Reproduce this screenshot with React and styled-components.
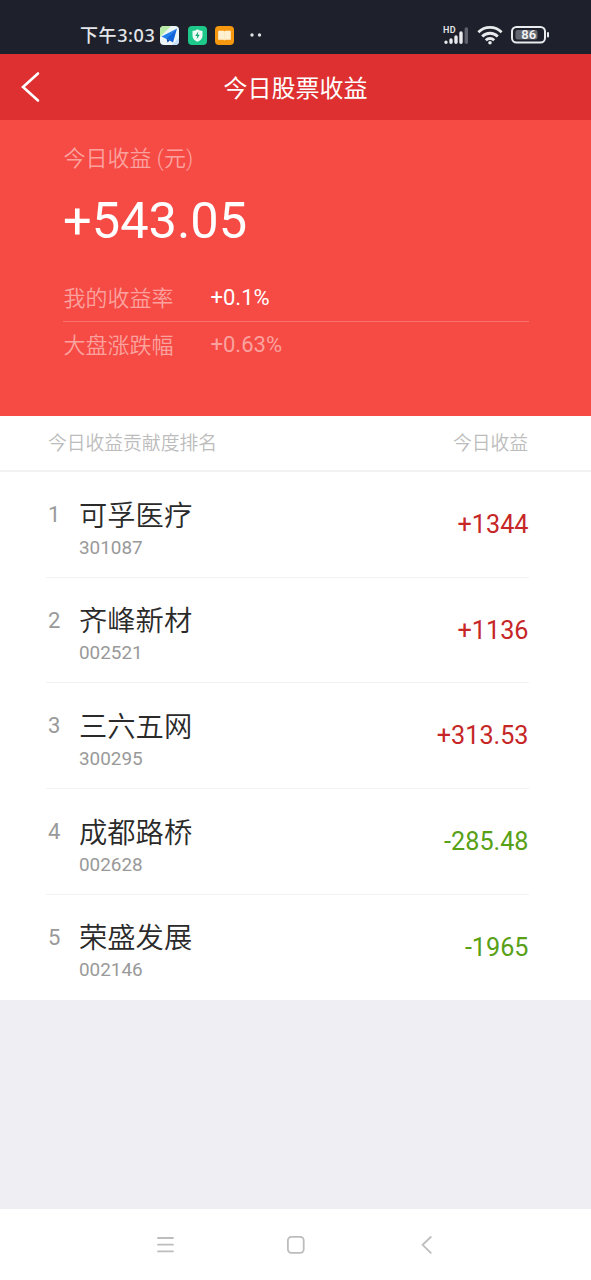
import React from 'react'
import styled, { createGlobalStyle } from 'styled-components'

const GlobalStyle = createGlobalStyle`
  * {
    box-sizing: border-box;
  }

  body {
    margin: 0;
    background: #efeef3;
    font-family: Roboto, 'Noto Sans CJK SC', sans-serif;
  }
`

const Screen = styled('div')`
  display: flex;
  flex-direction: column;
  width: 591px;
  height: 1280px;
  overflow: hidden;
  background: #efeef3;
`

const StatusBar = styled('div')`
  display: flex;
  align-items: center;
  justify-content: space-between;
  height: 54px;
  padding: 16px 41px 0 80px;
  background: #1e212b;
  color: #e4e6ea;
`

const StatusGroup = styled('div')`
  display: flex;
  align-items: center;
  height: 38px;
`

const Time = styled('span')`
  width: 80px;
  font: 500 18px/38px 'Noto Sans', 'Noto Sans CJK SC', sans-serif;
  letter-spacing: 0.6px;
  white-space: nowrap;
`

const StatusIcon = styled('svg')`
  display: block;
  flex: none;
  margin-right: ${props => props.$gap || 0}px;
`

const NavBar = styled('header')`
  display: grid;
  grid-template-columns: 60px 1fr 60px;
  align-items: center;
  height: 66px;
  background: #de3031;
  color: #fff;
`

const BackButton = styled('button')`
  height: 66px;
  padding: 0 0 0 20px;
  border: 0;
  background: none;
  color: #fff;

  svg {
    display: block;
  }
`

const Title = styled('h1')`
  margin: 0;
  padding-top: 5px;
  font-size: 24px;
  font-weight: 400;
  line-height: 61px;
  text-align: center;
`

const Summary = styled('section')`
  height: 296px;
  padding: 23px 62px 0 63px;
  background: #f64a45;
  color: #fff;
`

const SummaryLabel = styled('div')`
  padding-left: 0.5px;
  color: #fba29e;
  font-size: 22px;
  font-weight: 350;
  line-height: 32px;
`

const Total = styled('div')`
  margin-top: 14px;
  font-size: 50.6px;
  line-height: 64px;
`

const Rate = styled('div')`
  display: flex;
  align-items: center;
  height: ${props => props.$height}px;
  color: #fba29e;
  font-size: 22px;
  line-height: 32px;
`

const RateList = styled('div')`
  margin-top: 21px;

  ${Rate} + ${Rate} {
    border-top: 1px solid #f9716d;
  }
`

const RateName = styled('span')`
  width: 147.5px;
  padding: 2px 0 0 0.5px;
  font-weight: 350;
`

const RateValue = styled('span')`
  padding-top: 1px;
  color: ${props => (props.$strong ? '#fff' : '#fba29e')};
`

const ListHeader = styled('div')`
  display: flex;
  justify-content: space-between;
  height: 56px;
  padding: 1px 63px 0 48px;
  border-bottom: 2px solid #f3f3f3;
  background: #fff;
  color: #bcbcbc;
  font-size: 18.8px;
  font-weight: 350;
  line-height: 54px;
`

const StockList = styled('ul')`
  height: 527.5px;
  margin: 0;
  padding: 0 62px 0 46px;
  background: #fff;
  list-style: none;
`

const StockRow = styled('li')`
  display: grid;
  grid-template-columns: 31px 1fr auto;
  height: 105.7px;
  padding-left: 2px;
  border-bottom: 1px solid ${props => (props.$last ? 'transparent' : '#f2f2f2')};
`

const Rank = styled('span')`
  padding-top: 27px;
  color: #999;
  font-size: 22px;
  line-height: 32px;
`

const StockName = styled('div')`
  padding-top: 23.5px;
  color: #2a2a2a;
  font-size: 28.3px;
  font-weight: 350;
  line-height: 42px;
`

const StockCode = styled('div')`
  color: #999;
  font-size: 18.9px;
  line-height: 19px;
`

const Amount = styled('span')`
  padding-top: 35px;
  padding-right: 0.5px;
  color: ${props => (props.$up ? '#c62626' : '#58a016')};
  font-size: 25.2px;
  line-height: 36px;
`

const BottomNav = styled('nav')`
  display: grid;
  grid-template-columns: repeat(3, 130.5px);
  justify-content: center;
  align-items: center;
  justify-items: center;
  height: 71px;
  margin-top: auto;
  background: #fff;

  svg {
    display: block;
  }
`

const stocks = [
  { name: '可孚医疗', code: '301087', amount: '+1344' },
  { name: '齐峰新材', code: '002521', amount: '+1136' },
  { name: '三六五网', code: '300295', amount: '+313.53' },
  { name: '成都路桥', code: '002628', amount: '-285.48' },
  { name: '荣盛发展', code: '002146', amount: '-1965' },
]

const MapIcon = () => (
  <StatusIcon $gap={9} width="19" height="19" viewBox="0 0 19 19">
    <rect width="19" height="19" rx="4" fill="#eef5f6" />
    <path d="M4 0h7L0 11V4a4 4 0 0 1 4-4z" fill="#b9eba8" />
    <path d="M12 19l7-7v3a4 4 0 0 1-4 4z" fill="#c5dfff" />
    <path d="M17 2.5L1.5 10.5l5 2.5z" fill="#2280ec" />
    <path d="M17 2.5L6.5 12.5l6.5 4z" fill="#1264dc" />
    <path d="M6.5 12.5l1 4 2.3-2z" fill="#0b49a8" />
  </StatusIcon>
)

const ShieldIcon = () => (
  <StatusIcon $gap={8} width="19" height="19" viewBox="0 0 19 19">
    <rect width="19" height="19" rx="4" fill="#1dc88a" />
    <path d="M9.5 3.2c1.6 1 3.2 1.6 5 1.8v4.8c0 3-2.2 4.8-5 6-2.8-1.2-5-3-5-6V5c1.8-.2 3.4-.8 5-1.8z" fill="#effbf5" />
    <path d="M10.3 5.6L7.2 10h2l-.6 3.2 3.2-4.5H9.8z" fill="#16a673" />
  </StatusIcon>
)

const BookIcon = () => (
  <StatusIcon $gap={16} width="19" height="19" viewBox="0 0 19 19">
    <rect width="19" height="19" rx="4" fill="#f6980f" />
    <path d="M4 4.8h4.5l1 .6 1-.6H15a.8.8 0 0 1 .8.8v8.2h-5.3l-1 .8-1-.8H3.2V5.6a.8.8 0 0 1 .8-.8z" fill="#fff0d2" />
    <path d="M9.5 5.6v8.4" stroke="#fde3b4" strokeWidth=".6" />
  </StatusIcon>
)

const DotsIcon = () => (
  <StatusIcon width="12" height="4" viewBox="0 0 12 4">
    <circle cx="2" cy="2" r="1.7" fill="#dfe1e5" />
    <circle cx="9.5" cy="2" r="1.7" fill="#dfe1e5" />
  </StatusIcon>
)

const SignalIcon = () => (
  <StatusIcon $gap={7} width="28" height="20" viewBox="0 0 28 20">
    <text x="1" y="8" fontSize="9" fontWeight="600" letterSpacing=".3" fill="#e4e6ea">HD</text>
    <g strokeWidth="3.4" strokeLinecap="round" stroke="#e9eaed">
      <path d="M4 17.2v.1M9 15v2.2M14 12v5.2M19 8v9.2" />
      <path d="M24.3 4v13.2" stroke="#5e626b" />
    </g>
  </StatusIcon>
)

const WifiIcon = () => (
  <StatusIcon $gap={8} width="26" height="20" viewBox="0 0 26 20">
    <g fill="none" stroke="#e9eaed" strokeWidth="2.8">
      <path d="M1.4 7.2a16.5 16.5 0 0 1 23.2 0" />
      <path d="M5.2 11.5a11 11 0 0 1 15.6 0" />
      <path d="M8.8 15.2a6 6 0 0 1 8.4 0" />
    </g>
    <circle cx="13" cy="17.8" r="1.8" fill="#e9eaed" />
  </StatusIcon>
)

const BatteryIcon = () => (
  <StatusIcon width="39" height="18" viewBox="0 0 39 18">
    <rect x="1" y="1" width="33" height="15.5" rx="4.5" fill="none" stroke="#e9eaed" strokeWidth="2" />
    <rect x="4.5" y="4" width="22" height="9.5" rx="2" fill="#62666f" />
    <rect x="36" y="6" width="2" height="5.5" rx="1" fill="#e9eaed" />
    <text x="17.8" y="13.4" textAnchor="middle" fontSize="13" fontWeight="600" fill="#f1f2f4">86</text>
  </StatusIcon>
)

const App = () => (
  <Screen>
    <GlobalStyle />
    <StatusBar>
      <StatusGroup>
        <Time>下午3:03</Time>
        <MapIcon />
        <ShieldIcon />
        <BookIcon />
        <DotsIcon />
      </StatusGroup>
      <StatusGroup>
        <SignalIcon />
        <WifiIcon />
        <BatteryIcon />
      </StatusGroup>
    </StatusBar>

    <NavBar>
      <BackButton aria-label="返回">
        <svg width="22" height="34" viewBox="0 0 22 34" fill="none">
          <path d="M18 3.5L3 17l15 13.5" stroke="#fff" strokeWidth="2.6" strokeLinecap="round" />
        </svg>
      </BackButton>
      <Title>今日股票收益</Title>
    </NavBar>

    <Summary>
      <SummaryLabel>今日收益 (元)</SummaryLabel>
      <Total>+543.05</Total>
      <RateList>
        <Rate $height={47}>
          <RateName>我的收益率</RateName>
          <RateValue $strong>+0.1%</RateValue>
        </Rate>
        <Rate $height={46}>
          <RateName>大盘涨跌幅</RateName>
          <RateValue>+0.63%</RateValue>
        </Rate>
      </RateList>
    </Summary>

    <ListHeader>
      <span>今日收益贡献度排名</span>
      <span>今日收益</span>
    </ListHeader>
    <StockList>
      {stocks.map((stock, index) => (
        <StockRow key={stock.code} $last={index === stocks.length - 1}>
          <Rank>{index + 1}</Rank>
          <div>
            <StockName>{stock.name}</StockName>
            <StockCode>{stock.code}</StockCode>
          </div>
          <Amount $up={stock.amount.startsWith('+')}>{stock.amount}</Amount>
        </StockRow>
      ))}
    </StockList>

    <BottomNav>
      <svg width="18" height="18" viewBox="0 0 18 18">
        <path d="M2 2h15M2 8.7h15M2 15.4h15" stroke="#bdbdbd" strokeWidth="1.8" strokeLinecap="round" />
      </svg>
      <svg width="18" height="18" viewBox="0 0 18 18">
        <rect x=".9" y=".8" width="15.8" height="16" rx="3.5" fill="none" stroke="#bdbdbd" strokeWidth="1.8" />
      </svg>
      <svg width="18" height="18" viewBox="0 0 18 18" fill="none">
        <path d="M13.8 1L5.6 8.8l8.2 8" stroke="#bdbdbd" strokeWidth="1.8" strokeLinecap="round" />
      </svg>
    </BottomNav>
  </Screen>
)

export default App
